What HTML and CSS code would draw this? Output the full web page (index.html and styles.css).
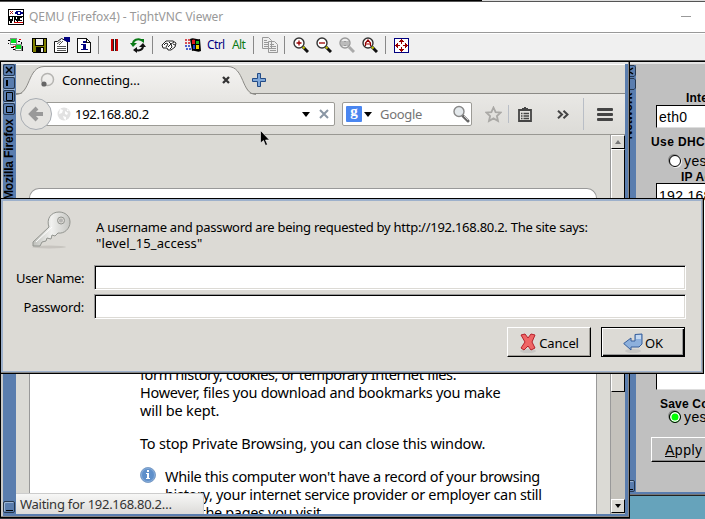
FILE: index.html
```html
<!DOCTYPE html>
<html lang="en">
<head>
<meta charset="utf-8">
<title>QEMU (Firefox4) - TightVNC Viewer</title>
<link rel="stylesheet" href="styles.css">
</head>
<body>
<div class="viewer">
  <div class="topedge"></div>
  <header class="titlebar">
    <svg class="vnc-logo" width="16" height="16" viewBox="0 0 16 16" shape-rendering="crispEdges"><path d="M0 0h16v16H0z"/><path fill="#fff" d="M1 1h14v6H1zM1 8h14v7H1z"/><path stroke="#b01818" d="M2 2l3 3M5 2l-3 3"/><path fill="#000080" d="M8 2h5v1h2v2h-2v1H9V5H7V3h1z"/><path fill="#fff" d="M10 3h2v2h-2z"/><path stroke="#000" stroke-width="1.400" fill="none" d="M1.500 7v3l1.500 3 1.500-3V7M6.500 13V8l3 4V7M14 8.500h-3v3h3"/><path fill="#c00" d="M6 13h9v1H6z"/></svg>
    <span class="title">QEMU (Firefox4) - TightVNC Viewer</span>
    <span class="minimize"></span>
  </header>
  <div class="toolbar">
    <svg class="ti" width="16" height="16" viewBox="0 0 16 16" shape-rendering="crispEdges"><path fill="#fff" stroke="#888" d="M2.500 1.500h6v6h-6zM7.500 7.500h6v6h-6z"/><path fill="#00df20" d="M3 2h5v4H3zM8 8h5v4H8z"/><path d="M0 3h2v1H0zM0 6h1v1H0zM10 4h2v1h-2zM13 5h1v2h-1zM3 10h3v1H3zM5 12h2v1H5zM14 9h1v5h-1z"/><path stroke="#d00" d="M5 9.500h3M11 2.500h2"/></svg>
    <svg class="ti ml8" width="15" height="15" viewBox="0 0 15 15" shape-rendering="crispEdges"><path d="M0 0h15v15H1l-1-1z"/><path fill="#808000" d="M1 1h2v7h9V1h2v13h-2V9H4v5H1z"/><path fill="#eee" d="M4 1h7v6H4zM9 10h2v4H9z"/></svg>
    <svg class="ti ml8" width="16" height="16" viewBox="0 0 16 16"><path fill="#fff" stroke="#111" d="M.5 4.500h3l4-3 6 3v11H.5z"/><path stroke="#555" d="M3 9.500h9M3 11.500h9M3 13.500h9M3 7l4-3M5 8l4-4"/><path fill="#000080" d="M10 0h6v5h-3l-3-2z"/></svg>
    <svg class="ti ml8" width="14" height="15" viewBox="0 0 14 15" shape-rendering="crispEdges"><path fill="#fff" stroke="#111" d="M.5.5h9l4 4v10H.5zM9.500.5v4h4"/><path fill="#000080" d="M6 3h3v2H6zM4 6h5v5h2v1H4v-1h2V7H4z"/></svg>
    <i class="sep s1"></i>
    <span class="pause"></span>
    <svg class="ti refresh" width="16" height="16" viewBox="0 0 16 16"><path fill="none" stroke="#0a7a16" stroke-width="2" d="M3 7c0-4 5-6 8-4"/><path fill="#0a7a16" d="M0 6h7L3 10zM8 2h6v4z"/><path fill="none" stroke="#111" stroke-width="2" d="M13 9c0 4-4 5-7 4"/><path fill="#111" d="M9 10h7l-3-4zM7 10v6l-4-3z"/></svg>
    <i class="sep s2"></i>
    <svg class="ti keys" width="16" height="12" viewBox="0 0 16 12"><path fill="#fff" stroke="#222" d="M1 6l4-4h7l3 2-1 4-4 3H7l-1-2H2z"/><path fill="none" stroke="#222" d="M3 6l2-2 2 1-2 3M8 3l2 2 3-2M7 8l3-3 1 3-2 2M12 5l2 1"/></svg>
    <svg class="ti flag" width="16" height="14" viewBox="0 0 16 14"><path d="M5 1c4-2 6 1 10 0l1 12c-4 2-5-1-9 0z"/><path fill="#e01820" d="M7 2q2-1 3 0v4H7z"/><path fill="#20b020" d="M11 3h3v3h-3z"/><path fill="#2040d0" d="M8 7h2v4H8z"/><path fill="#f0d000" d="M11 7h3v4h-3z"/><path stroke="#d01820" stroke-width="1.500" stroke-dasharray="2 1" d="M0 2h6M0 5h6"/><path stroke="#1830c0" stroke-width="1.500" stroke-dasharray="2 1" d="M0 8h6M1 11h6"/></svg>
    <span class="ctrl">Ctrl</span><span class="alt">Alt</span>
    <i class="sep s3"></i>
    <svg class="ti copy" width="17" height="16" viewBox="0 0 17 16"><path fill="#eee" stroke="#999" d="M.5.5h6l3 3v8h-9zM6.500 4.500h6l3 3v8h-9z"/><path stroke="#999" d="M2 3.500h3M2 5.500h4M2 7.500h4M2 9.500h4M8 7.500h4M8 9.500h6M8 11.500h6M8 13.500h6"/></svg>
    <i class="sep s4"></i>
    <svg class="ti z1" width="16" height="16" viewBox="0 0 16 16"><path stroke="#111" stroke-width="3" d="M10 10l5 5"/><path stroke="#c8c800" stroke-width="2" d="M9.500 9.500l2 2"/><circle cx="6" cy="6" r="5" fill="#fff" stroke="#333" stroke-width="1.400"/><path stroke="#900" stroke-width="1.300" d="M3.500 6h5M6 3.500v5"/></svg>
    <svg class="ti z2" width="16" height="16" viewBox="0 0 16 16"><path stroke="#111" stroke-width="3" d="M10 10l5 5"/><path stroke="#c8c800" stroke-width="2" d="M9.500 9.500l2 2"/><circle cx="6" cy="6" r="5" fill="#fff" stroke="#333" stroke-width="1.400"/><path stroke="#900" stroke-width="1.300" d="M3 6h6"/></svg>
    <svg class="ti z2" width="16" height="16" viewBox="0 0 16 16"><path stroke="#aaa" stroke-width="3" d="M10 10l5 5"/><circle cx="6" cy="6" r="5" fill="#eee" stroke="#999" stroke-width="1.400"/><path stroke="#999" stroke-width="1.200" fill="none" d="M3 4v5M5 4.500h2v4H5zM9 4v5"/></svg>
    <svg class="ti z2" width="16" height="16" viewBox="0 0 16 16"><path stroke="#111" stroke-width="3" d="M10 10l5 5"/><path stroke="#c8c800" stroke-width="2" d="M9.500 9.500l2 2"/><circle cx="6" cy="6" r="5" fill="#fff" stroke="#333" stroke-width="1.400"/><path stroke="#900" fill="none" stroke-width="1.200" d="M3.500 9V6L6 3l2.500 3v3M4 7h4"/></svg>
    <i class="sep s5"></i>
    <svg class="ti full" width="15" height="15" viewBox="0 0 15 15" shape-rendering="crispEdges"><path fill="#fff" stroke="#000080" d="M.5.5h14v14H.5z"/><path fill="#900" d="M7 1h1v1h1v1h1v1H8v2H7V4H5V3h1V2h1zM7 14h1v-1h1v-1h1v-1H8V9H7v2H5v1h1v1h1zM1 7v1h1v1h1v1h1V8h2V7H4V5H3v1H2v1zM14 7v1h-1v1h-1v1h-1V8H9V7h2V5h1v1h1v1z"/></svg>
  </div>

  <main class="desktop">
    <section class="win firefox">
      <aside class="sidebar">
        <svg width="13" height="52" viewBox="0 0 13 52" fill="none"><rect x=".5" y=".5" width="11" height="11" rx="1.500" stroke="#26384f"/><path stroke="#9bb4d4" d="M1 12.500h11M1 25.500h11M1 38.500h11"/><path stroke="#000" stroke-width="1.500" d="M3 3l6 6M9 3l-6 6"/><rect x=".5" y="13.500" width="11" height="11" rx="1.500" stroke="#26384f"/><path stroke="#000" stroke-width="2" d="M4 16v6"/><rect x=".5" y="26.500" width="11" height="11" rx="1.500" stroke="#26384f"/><path stroke="#000" d="M3.500 28.500h6v8h-6z"/><rect x=".5" y="39.500" width="11" height="11" rx="1.500" stroke="#26384f"/><path stroke="#000" d="M3.500 42.500h6v6h-6z"/></svg>
        <span class="vtitle">Mozilla Firefox</span>
        <i class="iconify"></i>
      </aside>
      <div class="client">
        <div class="tabs">
          <svg class="tabshape" width="240" height="30" viewBox="0 0 240 30"><defs><linearGradient id="tg" x1="0" y1="0" x2="0" y2="1"><stop offset="0" stop-color="#f4f3f1"/><stop offset="1" stop-color="#e9e8e5"/></linearGradient></defs><path fill="url(#tg)" d="M2 30C15 28 11 2 28 1.500H212C229 2 225 28 238 30z"/><path fill="none" stroke="#8b8a86" d="M0 29.500C15 29 11 2 28 1.500H212C229 2 225 29 240 29.500"/></svg>
          <svg class="spin" width="15" height="15" viewBox="0 0 15 15" fill="none"><circle cx="7.500" cy="7.500" r="6" stroke="#b5b4b1" stroke-width="1.500"/><circle cx="4" cy="12" r="2.600" fill="#666"/></svg>
          <span class="tabname">Connecting…</span>
          <svg class="tabx" width="8" height="8" viewBox="0 0 8 8"><path stroke="#333" stroke-width="2.300" d="M1 1l6 6M7 1L1 7"/></svg>
          <svg class="plus" width="14" height="14" viewBox="0 0 14 14"><path fill="#7fa8d9" stroke="#234b86" d="M5.500.5h3v5h5v3h-5v5h-3v-5h-5v-3h5z"/></svg>
        </div>
        <div class="nav">
          <svg class="back" width="32" height="32" viewBox="0 0 32 32"><circle cx="16" cy="16" r="15.500" fill="#e5e4e1" stroke="#a7acb2"/><path fill="none" stroke="#999" stroke-width="4" d="M23 16H12M17 10l-6 6 6 6"/></svg>
          <div class="url">
            <svg class="globe" width="14" height="14" viewBox="0 0 14 14"><circle cx="7" cy="7" r="6.500" fill="#e2e2e2"/><path fill="#fff" d="M3 2l3 1-1 3-3 1zM8 4l3 2-1 2-2-1zM6 9l3 1 0 3-2-1zM10 2l2 2-2 0z"/></svg>
            <span class="addr">192.168.80.2</span>
            <i class="drop"></i>
            <svg width="10" height="10" viewBox="0 0 10 10"><path stroke="#8996a4" stroke-width="2" d="M1 1l8 8M9 1L1 9"/></svg>
          </div>
          <div class="search">
            <span class="g">g</span><i class="drop"></i><span class="ph">Google</span>
            <svg width="18" height="18" viewBox="0 0 18 18"><path stroke="#666" stroke-width="3" stroke-linecap="round" d="M11 11l5 5"/><path stroke="#ccc" d="M12 11l4 4"/><circle cx="7" cy="6.500" r="5" fill="#e4e9ec" stroke="#888" stroke-width="1.400"/></svg>
          </div>
          <svg class="star" width="17" height="17" viewBox="0 0 17 17"><path fill="none" stroke="#aaa9a6" stroke-width="1.800" d="M8.500 1.500l2.100 4.600 5 .5-3.700 3.400 1.100 5-4.500-2.600L4 15l1.100-5L1.400 6.600l5-.5z"/></svg>
          <i class="line"></i>
          <svg class="list" width="14" height="15" viewBox="0 0 14 15"><path fill="none" stroke="#444" stroke-width="1.800" d="M1 3h12v11H1z"/><path fill="#444" d="M4 1h2V0h2v1h2v3H4z"/><path stroke="#444" stroke-width="1.300" d="M3 6.500h1.500M5.500 6.500H11M3 9h1.500M5.500 9H11M3 11.500h1.500M5.500 11.500H11"/></svg>
          <svg class="more" width="12" height="9" viewBox="0 0 12 9"><path fill="none" stroke="#444" stroke-width="2" d="M1 .7l4 3.800-4 3.800M6.500.7l4 3.800-4 3.800"/></svg>
          <i class="line tall"></i>
          <span class="burger"><i></i><i></i><i></i></span>
        </div>
        <div class="page">
          <article class="card">
            <p class="a"><span class="t1">form history, cookies, or temporary Internet files.</span><br><span class="t2">However, files you download and bookmarks you make</span><br><span class="t3">will be kept.</span></p>
            <p class="b">To stop Private Browsing, you can close this window.</p>
            <div class="note">
              <svg width="16" height="16" viewBox="0 0 16 16"><circle cx="8" cy="8" r="7.500" fill="#5e8fca" stroke="#7f9fc6"/><circle cx="8" cy="8" r="6.500" fill="none" stroke="#87addb"/><path fill="#fff" d="M7 3h2v2H7zM6 6h3v5h1v1H6v-1h1V7H6z"/></svg>
              <p><span class="t4">While this computer won't have a record of your browsing</span><br><span class="t5">history, your internet service provider or employer can still</span><br><span class="t6">track the pages you visit.</span></p>
            </div>
          </article>
          <div class="scroll"><i class="btn up"></i><i class="thumb"></i><i class="btn down"></i></div>
        </div>
        <div class="status">Waiting for 192.168.80.2…</div>
      </div>
    </section>

    <section class="win network">
      <aside class="netbar">
        <svg width="6" height="26" viewBox="0 0 6 26" fill="none"><path stroke="#26384f" d="M0 .5h4l1.500 1.500v8L4 11.500H0M0 13.500h4l1.500 1.500v8L4 24.500H0"/><path stroke="#000" stroke-width="1.500" d="M0 5l3-2M0 7l3 2"/></svg>
        <span class="vtitle">Network</span>
        <i class="iconify"></i>
      </aside>
      <div class="form">
        <b class="l1">Interface</b>
        <div class="field">eth0</div>
        <b class="l2">Use DHCP Broadcast?</b>
        <div class="radio"><i></i>yes</div>
        <b class="l3">IP Address</b>
        <div class="field big">192.168.80.3</div>
        <b class="l4">Save Configuration?</b>
        <div class="radio on"><i></i>yes</div>
        <div class="apply"><u>A</u>pply</div>
      </div>
    </section>

    <section class="dialog">
      <div class="ask">
        <svg width="42" height="40" viewBox="0 0 42 40"><defs><linearGradient id="kg"><stop offset="0" stop-color="#bfc0bb"/><stop offset=".5" stop-color="#f1f1ef"/><stop offset="1" stop-color="#c5c6c2"/></linearGradient></defs><ellipse cx="18" cy="36" rx="17" ry="1.500" fill="#bdbbb5" opacity=".7"/><path fill="url(#kg)" stroke="#92948f" fill-rule="evenodd" d="M2 35V31L18 16C15 8 20 1 28 1c6 0 11 4 11 10 0 7-6 12-12 11l-3 3-3-1-1 4-4-1-1 3-4 1-2 4zM30 6a3.500 3.500 0 1 0 .1 7A3.500 3.500 0 0 0 30 6z"/><path stroke="#fff" d="M5 31l16-15"/><circle cx="30" cy="9.500" r="2" fill="#b4b4b2"/></svg>
        <p><span class="q1">A username and password are being requested by http://192.168.80.2. The site says:</span><br><span class="q2">"level_15_access"</span></p>
      </div>
      <div class="row"><label class="un">User Name:</label><div class="input"></div></div>
      <div class="row"><label class="pw">Password:</label><div class="input"></div></div>
      <div class="actions">
        <div class="button"><svg width="18" height="20" viewBox="0 0 18 20"><ellipse cx="9" cy="18" rx="8" ry="2" fill="#bbb" opacity=".6"/><path fill="#ef6565" stroke="#b5202b" d="M2 2l4-1 3 4 3-4 4 1-3 7 3 6-4 2-3-4-4 4-3-2 4-6z"/></svg><span class="cancel">Cancel</span></div>
        <div class="button ok"><svg width="20" height="20" viewBox="0 0 20 20"><ellipse cx="10" cy="18" rx="8" ry="2" fill="#bbb" opacity=".6"/><path fill="#8db0dc" stroke="#375f9b" d="M.7 10.500L8 5v3h4V1.500l7-.5v10l-3 3H8v3z"/><path fill="#c5d9f1" d="M13 2h5v4h-5z"/></svg><span>OK</span></div>
      </div>
    </section>
    <svg class="cursor" width="10" height="16" viewBox="0 0 10 16"><path stroke="#fff" stroke-width=".6" d="M.5.5v12.500l3-2.500 2 5 2-1-2-4.500h4z"/></svg>
  </main>
</div>
</body>
</html>
```

FILE: styles.css
```css
* { box-sizing: border-box; }
body { margin: 0; width: 705px; height: 519px; overflow: hidden; font: 13px/16px "Noto Sans", "Open Sans", sans-serif; color: #000; }
svg, i { display: block; flex: none; }
p { margin: 0; }
span { white-space: nowrap; }
.viewer { width: 705px; height: 519px; display: flex; flex-direction: column; }
.topedge { height: 2px; background: linear-gradient(90deg, #000 482px, #ddd 482px); border-bottom: 1px solid #555; flex: none; }
.titlebar { height: 31px; flex: none; background: #fff; border-bottom: 1px solid #999; display: flex; align-items: center; padding: 0 14px 1px 8px; }
.title { margin-left: 5px; font-size: 12px; color: #999; letter-spacing: -.03px; }
.minimize { margin-left: auto; width: 10px; height: 1px; background: #999; }
.toolbar { height: 28px; flex: none; background: #f0f0f0; border-top: 1px solid #fff; border-bottom: 1px solid #666; display: flex; align-items: center; padding: 0 0 4px 8px; }
.ml8 { margin-left: 8px; }
.ml8 + .ml8 { margin-left: 7px; }
.sep { width: 1px; height: 18px; background: #888; }
.s1 { margin-left: 7px; }
.pause { width: 7px; height: 12px; margin-left: 12px; background: linear-gradient(90deg, #c00 2px, #222 2px 3px, #f0f0f0 3px 4px, #222 4px 5px, #c00 5px); }
.refresh { margin-left: 12px; }
.s2 { margin-left: 6px; }
.keys { margin-left: 8px; }
.flag { margin-left: 8px; }
.ctrl, .alt { font: 12px/16px "Noto Sans", sans-serif; color: #000080; width: 17px; margin-left: 6px; letter-spacing: -.6px; }
.alt { color: #0a7a16; margin-left: 8px; width: 14px; }
.s3 { margin-left: 7px; }
.copy { margin-left: 8px; }
.s4 { margin-left: 5px; }
.z1 { margin-left: 8px; }
.z2 { margin-left: 7px; }
.s5 { margin-left: 7px; }
.full { margin-left: 8px; }

.desktop { position: relative; flex: 1; background: linear-gradient(#66a3bb 0 0) 630px 0 no-repeat, #30353b; }
.win { position: absolute; top: 0; display: flex; }
.firefox { left: 0; width: 630px; height: 457px; border: 1px solid #000; box-shadow: inset -1px -1px #888; padding: 2px 3px 3px 2px; background: linear-gradient(#e4e4e4 0 0) 0 0/100% 2px no-repeat, linear-gradient(#c8c8c8 0 0) 0 0/2px 100% no-repeat, #5a7dae; }
.sidebar { width: 13px; background: #5a7dae; display: flex; flex-direction: column; padding-bottom: 1px; flex: none; }
.vtitle { writing-mode: vertical-rl; transform: rotate(180deg); font: bold 12px/13px "Liberation Sans", sans-serif; margin-top: 3px; width: 13px; letter-spacing: -.15px; }
.iconify { width: 12px; height: 12px; margin-top: auto; border: 1px solid #26384f; border-radius: 2px; box-shadow: inset 1px 1px #9bb4d4; background: linear-gradient(#000 0 0) 2px 8px/7px 1px no-repeat; }
.client { position: relative; width: 609px; height: 450px; background: #dbdad5; display: flex; flex-direction: column; overflow: hidden; border-top: 1px solid #fff; }
.tabs { height: 29px; position: relative; display: flex; align-items: center; padding-left: 24px; box-shadow: inset 0 -1px #8b8a86; flex: none; }
.tabshape { position: absolute; left: 0; top: 0; height: 30px; }
.spin, .tabname, .tabx { position: relative; }
.tabname { margin-left: 7px; width: 80px; letter-spacing: -.2px; }
.tabx { margin-left: 80px; }
.plus { margin-left: 22px; }
.nav { height: 41px; flex: none; background: linear-gradient(#e9e8e5, #dcdbd7); border-bottom: 1px solid #999893; display: flex; align-items: center; padding-left: 4px; }
.back { position: relative; z-index: 1; }
.url { height: 24px; width: 301px; margin-left: -18px; background: #fff; border: 1px solid #9c9b96; border-radius: 2px; display: flex; align-items: center; padding: 0 5px 0 22px; }
.addr { margin-left: 4px; letter-spacing: -.3px; }
.drop { border: 4px solid transparent; border-top: 5px solid #000; border-bottom: 0; }
.url .drop { margin-left: auto; margin-right: 9px; }
.search { width: 130px; height: 24px; margin-left: 7px; background: #fff; border: 1px solid #9c9b96; border-radius: 2px; display: flex; align-items: center; padding: 0 1px 0 3px; }
.g { width: 16px; height: 16px; background: #4a86f0; color: #fff; font: bold 15px/11px "Liberation Serif", serif; text-align: center; border-radius: 1px; }
.search .drop { margin-left: 2px; }
.ph { color: #757575; margin-left: 8px; letter-spacing: -.3px; }
.search svg { margin-left: auto; }
.star { margin-left: 13px; }
.line { width: 1px; height: 18px; background: #b9bec6; margin-left: 6px; }
.list { margin-left: 9px; }
.more { margin-left: 25px; }
.tall { height: 32px; margin-left: 14px; }
.burger { margin-left: 13px; width: 16px; display: flex; flex-direction: column; gap: 2px; }
.burger i { height: 3px; background: #444; border-radius: 1px; }
.page { flex: 1; display: flex; justify-content: space-between; min-height: 0; padding-left: 13px; }
.card { width: 568px; margin-top: 53px; background: #fff; border: 1px solid #999; border-bottom: 0; border-radius: 10px 10px 0 0; padding: 176px 0 0 110px; font-size: 14.5px; line-height: 18px; overflow: hidden; }
.t1 { letter-spacing: -.37px; }
.t2 { letter-spacing: -.26px; }
.t3 { letter-spacing: -.15px; }
.b { margin-top: 15px; letter-spacing: -.2px; }
.t4, .t5, .t6 { letter-spacing: -.34px; }
.note { display: flex; gap: 9px; margin-top: 15px; }
.scroll { width: 15px; display: flex; flex-direction: column; background: #c4c2bc; border-left: 1px solid #999; }
.btn, .thumb { background: #dcdad5; border: 1px solid #fff; border-right-color: #000; border-bottom-color: #000; }
.btn { height: 14px; flex: none; }
.thumb { height: 243px; }
.down { margin-top: auto; margin-bottom: 1px; }
.btn::after { content: ""; display: block; margin: 4px auto 0; width: 0; border: 3px solid transparent; }
.up::after { border-bottom: 4px solid #777; border-top: 0; }
.down::after { border-top: 4px solid #000; border-bottom: 0; }
.status { position: absolute; left: 0; bottom: 0; width: 188px; height: 21px; border: 1px solid #ccc; border-left: 0; border-bottom: 0; border-radius: 0 3px 0 0; background: linear-gradient(#f7f7f6, #dcdbd8); color: #333; padding: 2px 4px; white-space: nowrap; letter-spacing: -.28px; }

.network { left: 630px; width: 75px; height: 435px; background: #c0c0c0; border-top: 1px solid #000; border-bottom: 1px solid #222; box-shadow: inset 0 -1px #777, inset 0 -3px #5a7dae, inset 0 2px #e4e4e4; padding: 3px 0 3px; }
.netbar { width: 6px; background: #5a7dae; display: flex; flex-direction: column; overflow: hidden; flex: none; }
.netbar .vtitle { margin: 2px 0 0 -8px; }
.netbar .iconify { margin-left: -7px; }
.form { font: 14px/16px "Liberation Sans", sans-serif; flex: 1; overflow: hidden; padding-top: 26px; white-space: nowrap; }
.form b { display: block; font-size: 12px; line-height: 14px; letter-spacing: .2px; }
.l1 { margin-left: 50px; }
.field { margin: 0 0 0 20px; height: 23px; background: #fff; border: 1px solid #000; border-bottom-color: #ddd; border-right: 0; padding: 3px 2px; letter-spacing: .3px; }
.form .l2 { margin: 7px 0 0 15px; letter-spacing: .4px; }
.radio { margin: 4px 0 0 33px; display: flex; gap: 3px; align-items: center; letter-spacing: .4px; }
.radio i { width: 12px; height: 12px; border-radius: 50%; border: 1.500px solid #000; background: #fff; box-shadow: -1px -1px #888, 1px 1px #eee; }
.on i { background: #0f0; box-shadow: inset 0 0 0 1.500px #fff, -1px -1px #888; }
.l3 { margin: 1px 0 0 45px; }
.big { height: 207px; padding-top: 4px; margin-top: -1px; }
.l4 { margin: 7px 0 0 24px; }
.form .on { margin-top: -2px; }
.apply { margin: 12px 0 0 15px; width: 70px; height: 25px; border: 1px solid #fff; border-bottom: 1px solid #000; padding: 4px 13px; box-shadow: inset 0 -1px #888; letter-spacing: .5px; }

.dialog { position: absolute; left: 0; top: 137px; width: 704px; height: 176px; background: #dcdad5; border: 1px solid #000; box-shadow: inset -1px -1px #888, inset 0 0 0 2px #9db0cb; padding: 12px 17px 0 15px; display: flex; flex-direction: column; }
.ask { display: flex; height: 54px; padding-left: 15px; }
.ask p { margin-left: 23px; padding-top: 8px; }
.q1 { letter-spacing: -.27px; }
.q2 { letter-spacing: .12px; }
.row { display: flex; align-items: center; height: 25px; margin-bottom: 4px; }
.row label { width: 68px; text-align: right; white-space: nowrap; margin-right: 10px; letter-spacing: -.4px; }
.row .pw { letter-spacing: -.2px; }
.input { flex: 1; height: 25px; background: #fff; border: 1px solid #999; border-right-color: #fff; border-bottom-color: #fff; box-shadow: inset 1px 1px #000, inset -1px -1px #dcdad5; }
.actions { display: flex; justify-content: flex-end; gap: 10px; margin: 4px 1px 0 0; }
.button { width: 84px; height: 30px; border: 1px solid #fff; border-right-color: #000; border-bottom-color: #000; box-shadow: inset -1px -1px #a09e98; display: flex; align-items: center; justify-content: center; gap: 2px; padding-top: 1px; }
.cancel { letter-spacing: -.15px; }
.ok { border: 1px solid #000; box-shadow: inset 1px 1px #fff, inset -1px -1px #000, inset -2px -2px #999; }
.cursor { position: absolute; left: 260px; top: 69px; }
```
